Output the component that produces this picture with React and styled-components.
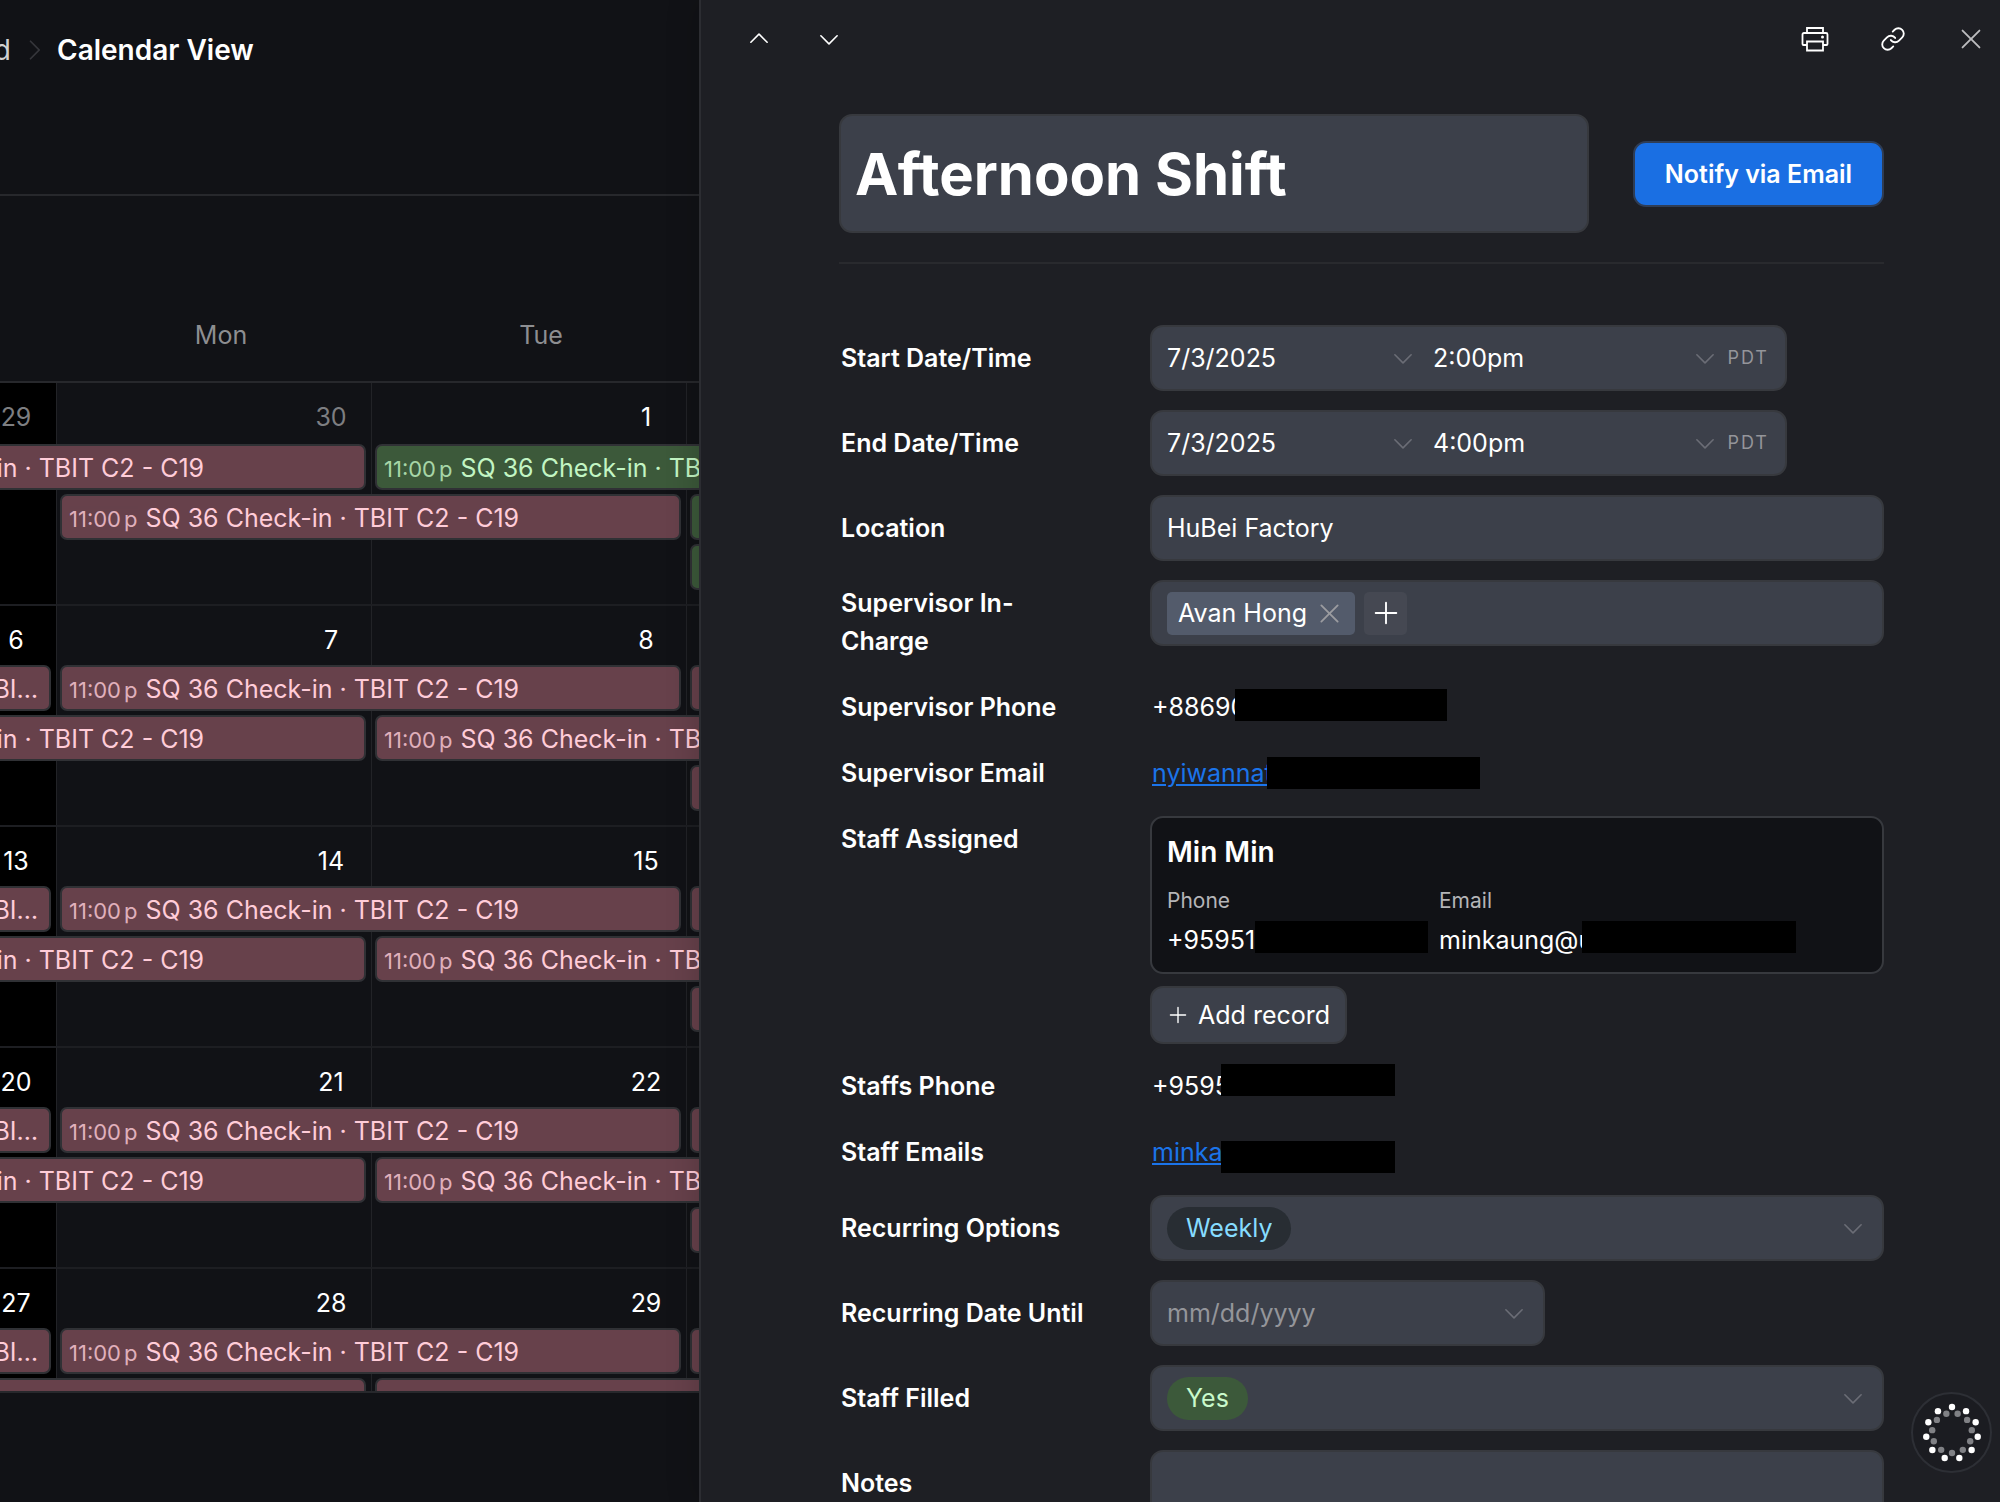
import { Fragment } from 'react';
import styled, { createGlobalStyle, css } from 'styled-components';
import { Link } from 'lucide-react';
import { PiCaretDown, PiCaretRight, PiCaretUp, PiPlus, PiX } from 'react-icons/pi';

const TITLE = 'SQ 36 Check-in · TBIT C2 - C19';

const regularEvents = [
    { day: 1, span: 1, slot: 1, continued: true },
    { day: 2, span: 2, slot: 1 },
    { day: 4, span: 1, slot: 1 },
    { day: 1, span: 2, slot: 2 },
    { day: 3, span: 2, slot: 2 },
    { day: 4, span: 1, slot: 3 },
];

const weeks = [
    {
        days: [29, 30, 1, 2, 3, 4, 5],
        events: [
            { day: 1, span: 2, slot: 1 },
            { day: 3, span: 2, slot: 1, green: true },
            { day: 2, span: 2, slot: 2 },
            { day: 4, span: 1, slot: 2, green: true },
            { day: 4, span: 1, slot: 3, green: true },
        ],
    },
    { days: [6, 7, 8, 9, 10, 11, 12], events: regularEvents },
    { days: [13, 14, 15, 16, 17, 18, 19], events: regularEvents },
    { days: [20, 21, 22, 23, 24, 25, 26], events: regularEvents },
    { days: [27, 28, 29, 30, 31, 1, 2], events: regularEvents },
];

const weekdays = ['Sun', 'Mon', 'Tue', 'Wed', 'Thu', 'Fri', 'Sat'];

function Calendar() {
    return (
        <CalendarPane>
            <Trail aria-label="Breadcrumb">
                <Crumb href="#dashboard">Dashboard</Crumb>
                <PiCaretRight size={28} />
                <Current>Calendar View</Current>
            </Trail>
            <Weekdays>
                {weekdays.map((name) => <span key={name}>{name}</span>)}
            </Weekdays>
            <Month>
                {weeks.map((week, index) => (
                    <Week key={index}>
                        {week.days.map((day, col) => (
                            <Day
                                key={col}
                                $col={col + 1}
                                $first={index === 0}
                                $outside={index === 0 && day > 20}
                            >
                                <span>{day}</span>
                            </Day>
                        ))}
                        {week.events.map((event, i) => (
                            <Event
                                key={i}
                                $day={event.day}
                                $span={event.span}
                                $slot={event.slot}
                                $green={event.green}
                                $continued={event.continued}
                            >
                                {!event.continued && <Time>11:00<span>p</span></Time>}
                                {TITLE}
                            </Event>
                        ))}
                    </Week>
                ))}
            </Month>
        </CalendarPane>
    );
}

function PrinterIcon() {
    return (
        <svg width="28" height="26" viewBox="0 0 28 26" fill="none" stroke="currentColor" strokeWidth="1.8">
            <path d="M6 7V2h16v5" />
            <path d="M6 19H2.500Q1.500 19 1.500 18V8.500Q1.500 7 3 7H25Q26.500 7 26.500 8.500V18Q26.500 19 25.500 19H22" />
            <path d="M6 15.500h16V24.500H6z" />
            <circle cx="21.500" cy="11" r="1.500" fill="currentColor" stroke="none" />
        </svg>
    );
}

function DateTime({ id, label, date, time }) {
    return (
        <Row>
            <Label htmlFor={id}>{label}</Label>
            <Field $width="637px">
                <DateInput id={id} defaultValue={date} />
                <Caret />
                <TimeInput aria-label={`${label} time`} defaultValue={time} />
                <Caret />
                <Zone>PDT</Zone>
            </Field>
        </Row>
    );
}

function Hidden({ children, left, top, width }) {
    return (
        <Masked>
            {children}
            <Mask $left={left} $top={top} $width={width} />
        </Masked>
    );
}

function Badge() {
    const dots = Array.from({ length: 11 }, (_, i) => (i * 2 * Math.PI) / 11);
    return (
        <BadgeButton aria-label="Open menu">
            <svg width="64" height="64" viewBox="-32 -32 64 64">
                {dots.map((angle) => (
                    <Fragment key={angle}>
                        <circle cx={Math.sin(angle) * 26} cy={-Math.cos(angle) * 26} r="3.2" fill="#fff" />
                        <circle cx={-Math.sin(angle) * 20} cy={Math.cos(angle) * 20} r="3.2" fill="#808185" />
                    </Fragment>
                ))}
            </svg>
        </BadgeButton>
    );
}

function Record() {
    return (
        <Panel>
            <Toolbar>
                <ToolGroup $gap="24px">
                    <IconButton aria-label="Previous record"><PiCaretUp size={26} /></IconButton>
                    <IconButton aria-label="Next record"><PiCaretDown size={26} /></IconButton>
                </ToolGroup>
                <ToolGroup $gap="32px">
                    <IconButton aria-label="Print"><PrinterIcon /></IconButton>
                    <IconButton aria-label="Copy link"><Link size={26} strokeWidth={1.7} /></IconButton>
                    <IconButton aria-label="Close" $muted><PiX size={30} /></IconButton>
                </ToolGroup>
            </Toolbar>
            <Content>
                <Heading>
                    <TitleInput aria-label="Shift name" defaultValue="Afternoon Shift" />
                    <Notify>Notify via Email</Notify>
                </Heading>
                <Form>
                    <DateTime id="start" label="Start Date/Time" date="7/3/2025" time="2:00pm" />
                    <DateTime id="end" label="End Date/Time" date="7/3/2025" time="4:00pm" />
                    <Row>
                        <Label htmlFor="location">Location</Label>
                        <Field><TextInput id="location" defaultValue="HuBei Factory" /></Field>
                    </Row>
                    <Row $top>
                        <Label as="span">Supervisor In-Charge</Label>
                        <Field>
                            <Tag>
                                Avan Hong
                                <TagRemove aria-label="Remove Avan Hong"><PiX size={29} /></TagRemove>
                            </Tag>
                            <TagAdd aria-label="Add supervisor"><PiPlus size={30} /></TagAdd>
                        </Field>
                    </Row>
                    <Row>
                        <Label as="span">Supervisor Phone</Label>
                        <Value><Hidden left={83} top={1} width={212}>+88690</Hidden></Value>
                    </Row>
                    <Row>
                        <Label as="span">Supervisor Email</Label>
                        <Value><Hidden left={115} top={3} width={213}><a href="#email">nyiwannat</a></Hidden></Value>
                    </Row>
                    <Row $top>
                        <Label as="span">Staff Assigned</Label>
                        <Staff>
                            <Card>
                                <Name>Min Min</Name>
                                <Details>
                                    <div>
                                        <dt>Phone</dt>
                                        <dd><Hidden left={88} top={0} width={173}>+95951</Hidden></dd>
                                    </div>
                                    <div>
                                        <dt>Email</dt>
                                        <dd><Hidden left={143} top={0} width={214}>minkaung@u</Hidden></dd>
                                    </div>
                                </Details>
                            </Card>
                            <AddRecord><PiPlus size={22} />Add record</AddRecord>
                        </Staff>
                    </Row>
                    <Row>
                        <Label as="span">Staffs Phone</Label>
                        <Value><Hidden left={69} top={-3} width={174}>+9595</Hidden></Value>
                    </Row>
                    <Row>
                        <Label as="span">Staff Emails</Label>
                        <Value><Hidden left={69} top={8} width={174}><a href="#emails">minka</a></Hidden></Value>
                    </Row>
                    <Row>
                        <Label htmlFor="recurring">Recurring Options</Label>
                        <Field>
                            <PillSelect id="recurring"><option>Weekly</option></PillSelect>
                            <Caret />
                        </Field>
                    </Row>
                    <Row>
                        <Label htmlFor="until">Recurring Date Until</Label>
                        <Field $width="395px">
                            <TextInput id="until" placeholder="mm/dd/yyyy" />
                            <Caret />
                        </Field>
                    </Row>
                    <Row>
                        <Label htmlFor="filled">Staff Filled</Label>
                        <Field>
                            <PillSelect id="filled" $green><option>Yes</option></PillSelect>
                            <Caret />
                        </Field>
                    </Row>
                    <Row $top>
                        <Label htmlFor="notes" $tall>Notes</Label>
                        <Notes id="notes" />
                    </Row>
                </Form>
            </Content>
        </Panel>
    );
}

const GlobalStyle = createGlobalStyle`
    * {
        box-sizing: border-box;
    }
    body {
        margin: 0;
        background: #111216;
        color: #fff;
        font: 400 25px/38px Inter, sans-serif;
    }
    button, input, select, textarea {
        font: inherit;
        color: inherit;
        padding: 0;
        border: none;
        background: none;
        outline: none;
    }
    svg {
        flex: none;
        display: block;
    }
`

const Page = styled.div`
    display: grid;
    grid-template-columns: calc(35% - 1px) minmax(0, 1fr);
    height: 100vh;
    overflow: hidden;
`

const CalendarPane = styled.main`
    display: flex;
    flex-direction: column;
    min-width: 0;
    min-height: 0;
    overflow: hidden;
    padding-bottom: 109px;
`

/* the calendar is scrolled sideways, most of Sunday is out of view */
const scrolled = css`
    margin-left: -259px;
`

const Trail = styled.nav`
    ${scrolled}
    display: flex;
    align-items: center;
    gap: 9px;
    height: 196px;
    flex: none;
    padding-bottom: 94px;
    border-bottom: 2px solid #27282c;
    font-size: 28px;
    color: #35363b;
`

const Crumb = styled.a`
    width: 270px;
    text-align: right;
    text-decoration: none;
    color: #d0d0d2;
`

const Current = styled.span`
    font-weight: 600;
    color: #fff;
`

const Weekdays = styled.div`
    ${scrolled}
    display: grid;
    grid-template-columns: repeat(7, 320px);
    flex: none;
    padding: 120px 0 27px;
    border-bottom: 2px solid #27282c;
    text-align: center;
    color: #8d8e91;
`

const Month = styled.div`
    ${scrolled}
    flex: 1;
    min-height: 0;
    overflow: hidden;
    border-bottom: 2px solid #27282c;
`

const Week = styled.div`
    display: grid;
    grid-template-columns: repeat(7, 315px);
    grid-template-rows: 61px repeat(3, 50px) 10px;
`

const Day = styled.div`
    grid-column: ${(p) => p.$col};
    grid-row: 1 / -1;
    display: flex;
    justify-content: flex-end;
    padding: 15px 16px 0 0;
    border-left: 1px solid #222327;
    border-top: ${(p) => (p.$first ? 'none' : '2px solid #1d1e22')};
    background-color: ${(p) => (p.$col === 1 ? '#000' : 'transparent')};
    color: ${(p) => (p.$outside ? '#7d7e81' : '#fff')};

    span {
        width: 48px;
        text-align: center;
    }
`

const Event = styled.div`
    grid-column: ${(p) => p.$day} / span ${(p) => p.$span};
    grid-row: ${(p) => p.$slot + 1};
    height: 46px;
    margin: 0 5px 0 4px;
    padding: 3px 7px 0 ${(p) => (p.$continued ? '22px' : '7px')};
    border: 2px solid #303135;
    border-radius: 7px;
    overflow: hidden;
    white-space: nowrap;
    text-overflow: ellipsis;
    background-color: ${(p) => (p.$green ? '#3c593a' : '#67414b')};
    color: ${(p) => (p.$green ? '#c2f5c3' : '#ffccd8')};
`

const Time = styled.span`
    margin-right: 8px;
    font-size: 22px;
    opacity: 0.8;

    span {
        margin-left: 3px;
    }
`

const Panel = styled.aside`
    min-width: 0;
    overflow: hidden;
    background-color: #1e1f24;
    border-left: 2px solid #2c2d32;
    box-shadow: 0 0 32px rgba(0, 0, 0, 0.2);
`

const Toolbar = styled.header`
    display: flex;
    align-items: center;
    justify-content: space-between;
    height: 78px;
    padding: 0 6px 0 35px;
`

const ToolGroup = styled.div`
    display: flex;
    gap: ${(p) => p.$gap};
`

const IconButton = styled.button`
    display: flex;
    align-items: center;
    justify-content: center;
    width: 46px;
    height: 46px;
    color: ${(p) => (p.$muted ? '#bcbcbf' : '#fff')};
    cursor: pointer;
`

const Content = styled.div`
    padding: 36px 116px 0 138px;
`

const Heading = styled.div`
    display: flex;
    align-items: center;
    gap: 44px;
    padding-bottom: 29px;
    margin-bottom: 61px;
    border-bottom: 2px solid #292a2e;
`

const TitleInput = styled.input`
    flex: 1;
    min-width: 0;
    height: 119px;
    padding: 0 14px;
    border: 2px solid #37393e;
    border-radius: 13px;
    background-color: #3c404a;
    font-size: 58px;
    font-weight: 700;
`

const Notify = styled.button`
    width: 251px;
    height: 66px;
    border: 2px solid #2f3d55;
    border-radius: 13px;
    background-color: #1a6fe3;
    font-weight: 600;
    cursor: pointer;
`

const Form = styled.form`
    display: grid;
    gap: 19px;
`

const Row = styled.div`
    display: grid;
    grid-template-columns: 250px minmax(0, 1fr);
    column-gap: 61px;
    align-items: ${(p) => (p.$top ? 'start' : 'center')};
`

const Label = styled.label`
    padding: ${(p) => (p.$tall ? '14px' : '4px')} 0 5px 2px;
    font-weight: 600;
`

const Field = styled.div`
    display: flex;
    align-items: center;
    gap: 9px;
    width: ${(p) => p.$width || '100%'};
    max-width: 100%;
    height: 66px;
    padding: 0 16px 0 15px;
    border: 2px solid #37393e;
    border-radius: 13px;
    background-color: #3c404a;
`

const TextInput = styled.input`
    flex: 1;
    min-width: 0;

    &::placeholder {
        color: #94959a;
        opacity: 1;
    }
`

const DateInput = styled(TextInput)`
    flex: none;
    width: 214px;
`

const TimeInput = styled(TextInput)`
    margin-left: 8px;
`

const Caret = styled(PiCaretDown).attrs({ size: 26 })`
    margin-left: auto;
    color: #6b6d76;
`

const Zone = styled.span`
    font-size: 18px;
    letter-spacing: 2px;
    color: #94959a;
`

const Tag = styled.span`
    display: flex;
    align-items: center;
    gap: 8px;
    height: 43px;
    padding: 0 11px;
    border-radius: 5px;
    background-color: #535b6b;
`

const TagRemove = styled.button`
    color: #9b9ca0;
    cursor: pointer;
`

const TagAdd = styled.button`
    display: flex;
    align-items: center;
    justify-content: center;
    width: 43px;
    height: 43px;
    border-radius: 5px;
    background-color: #454852;
    cursor: pointer;
`

const Value = styled.div`
    padding: 4px 0 5px 2px;

    a {
        color: #1b74ea;
    }
`

const Masked = styled.span`
    position: relative;
    display: block;
`

const Mask = styled.span`
    position: absolute;
    left: ${(p) => p.$left}px;
    top: ${(p) => p.$top}px;
    width: ${(p) => p.$width}px;
    height: 32px;
    background-color: #000;
`

const Staff = styled.div`
    display: grid;
    justify-items: start;
    gap: 12px;
`

const Card = styled.article`
    width: 100%;
    padding: 15px 15px 13px;
    border: 2px solid #37393e;
    border-radius: 13px;
    background-color: #111216;
`

const Name = styled.h3`
    margin: 0 0 16px;
    font-size: 28px;
    font-weight: 600;
`

const Details = styled.dl`
    display: grid;
    grid-template-columns: 272px 1fr;
    margin: 0;

    dt {
        margin-bottom: 6px;
        font-size: 21px;
        line-height: 28px;
        color: #b5b5b8;
    }
    dd {
        margin: 0;
    }
`

const AddRecord = styled.button`
    display: flex;
    align-items: center;
    gap: 9px;
    height: 58px;
    padding: 0 15px;
    border: 2px solid #37393e;
    border-radius: 13px;
    background-color: #3c404a;
    cursor: pointer;
`

const PillSelect = styled.select`
    appearance: none;
    field-sizing: content;
    height: 43px;
    padding: 0 19px;
    border-radius: 22px;
    background-color: ${(p) => (p.$green ? '#3c593a' : '#282d33')};
    color: ${(p) => (p.$green ? '#c9f9cb' : '#86dcff')};
`

const Notes = styled.textarea`
    width: 100%;
    height: 160px;
    padding: 12px 15px;
    border: 2px solid #37393e;
    border-radius: 13px;
    background-color: #3c404a;
    resize: none;
`

const BadgeButton = styled.button`
    position: fixed;
    right: 8px;
    bottom: 29px;
    display: flex;
    align-items: center;
    justify-content: center;
    width: 81px;
    height: 81px;
    border: 2px solid #2d2f35;
    border-radius: 50%;
    background-color: #1b1c21;
    cursor: pointer;
`

function App() {
    return (
        <>
            <GlobalStyle />
            <Page>
                <Calendar />
                <Record />
            </Page>
            <Badge />
        </>
    );
}

export default App;
